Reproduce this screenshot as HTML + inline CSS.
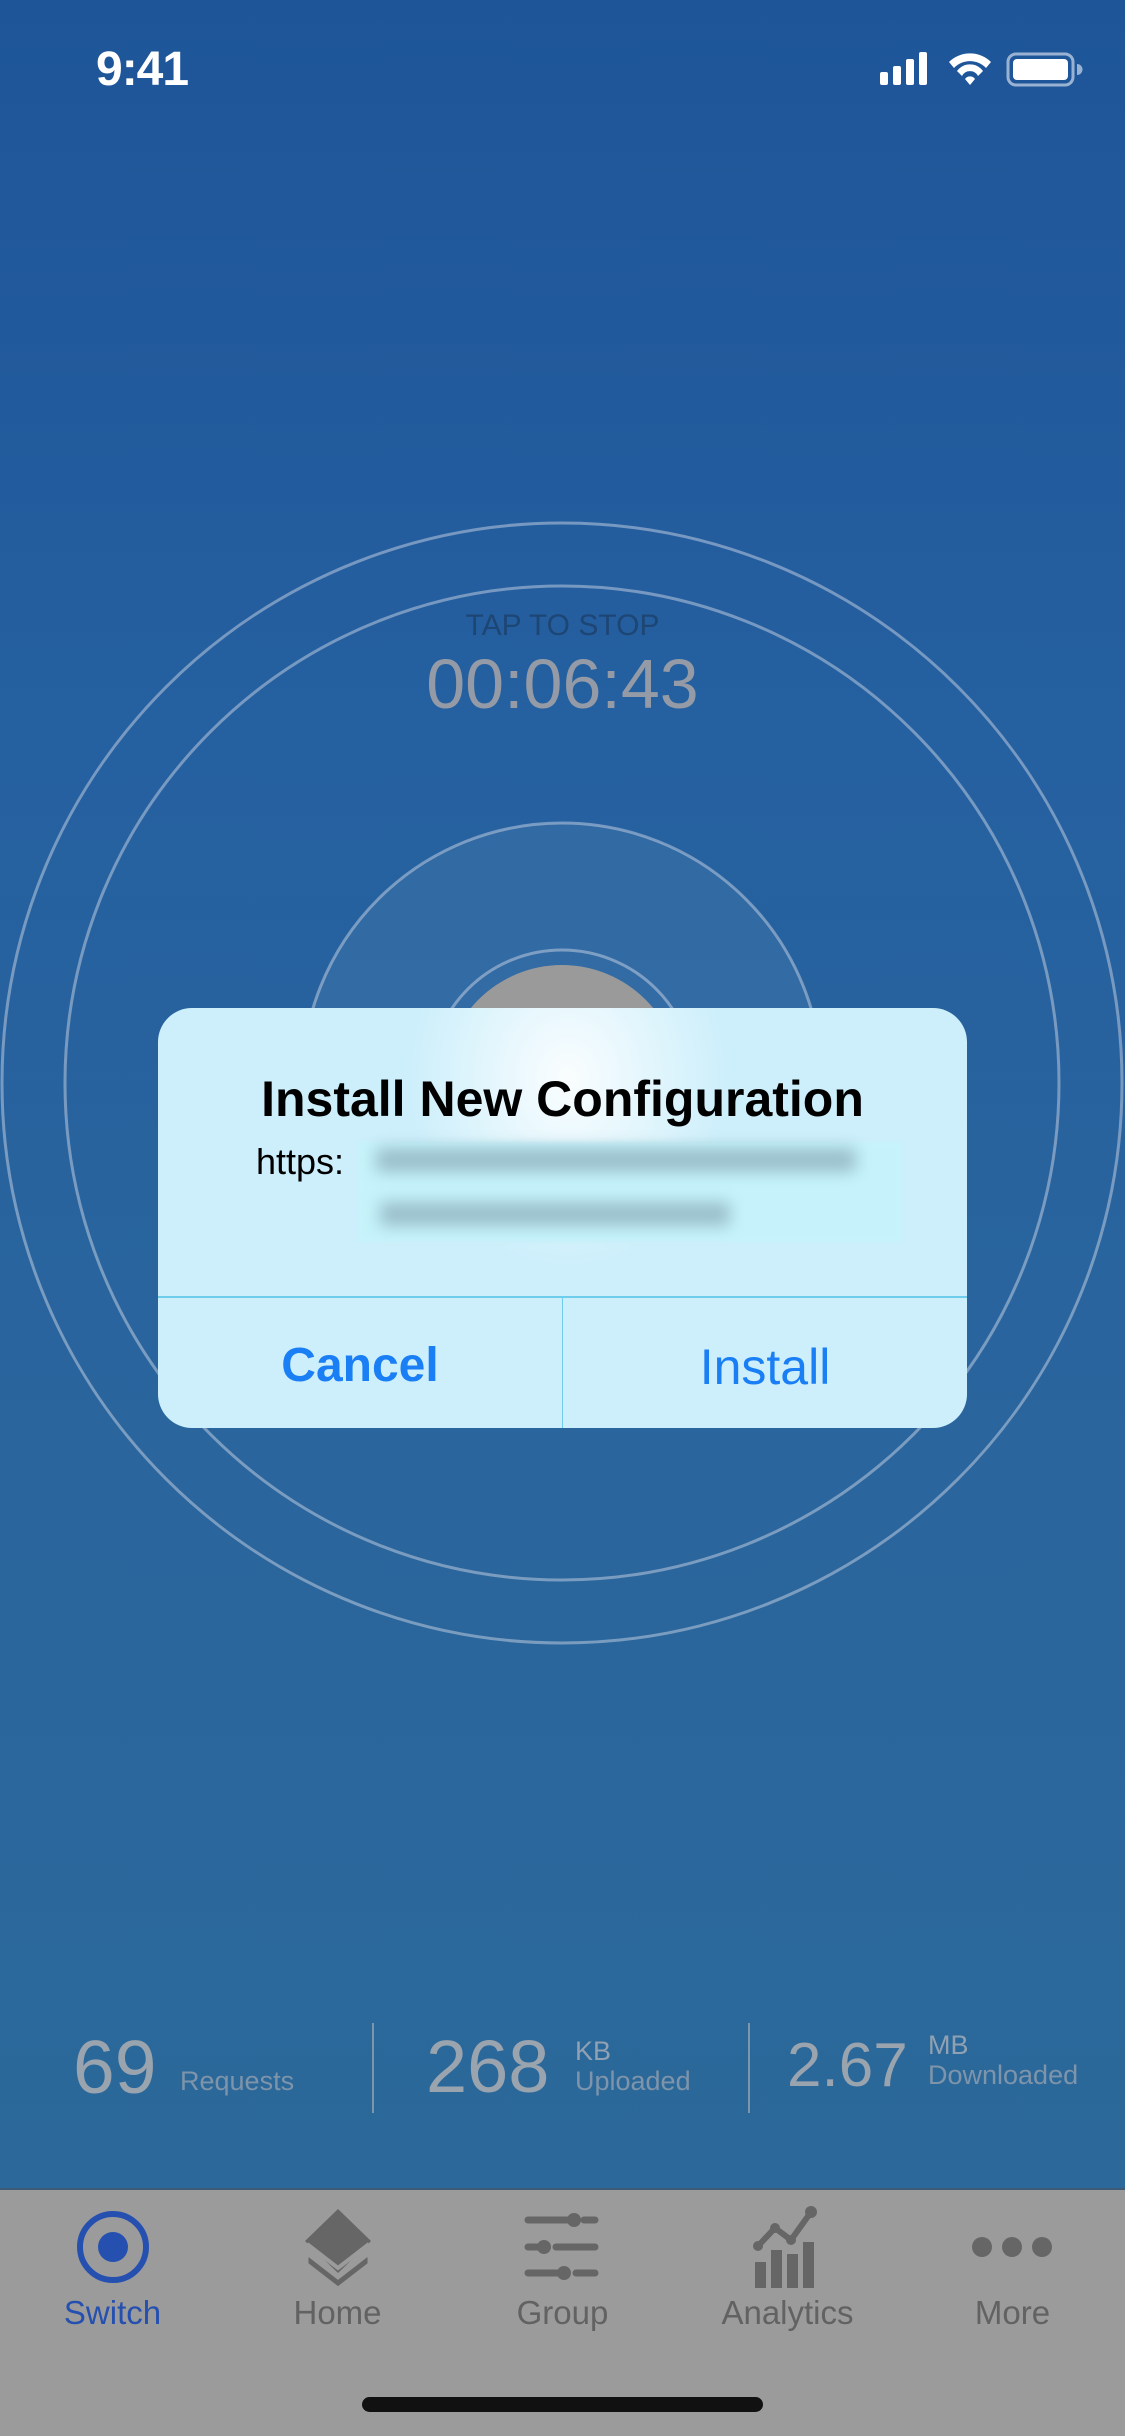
<!DOCTYPE html>
<html><head><meta charset="utf-8"><style>
*{margin:0;padding:0;box-sizing:border-box}
body{width:1125px;height:2436px;overflow:hidden;position:relative;font-family:"Liberation Sans",sans-serif;background:linear-gradient(#1e5599 0%,#2560a0 30%,#2a659d 60%,#2c6a99 100%)}
.abs{position:absolute}
.tab{position:absolute;top:2188px;width:225px;height:248px;text-align:center}
.tab .lbl{position:absolute;top:106px;left:0;width:100%;font-size:33px;color:#626262}
</style></head><body>
<div class="abs" style="left:96px;top:42px;font-size:48px;font-weight:bold;color:#fff;letter-spacing:-1px">9:41</div>
<svg class="abs" style="left:878px;top:50px" width="210" height="40" viewBox="0 0 210 40">
<rect x="2" y="22" width="8" height="13" rx="2" fill="#fff"/><rect x="15" y="16" width="8" height="19" rx="2" fill="#fff"/><rect x="28" y="9" width="8" height="26" rx="2" fill="#fff"/><rect x="41" y="2" width="8" height="33" rx="2" fill="#fff"/>
<path d="M71 12 A30 30 0 0 1 113 12 L108 18 A22 22 0 0 0 76 18Z M79 21 A16 16 0 0 1 105 21 L100 26 A9 9 0 0 0 84 26Z M87 29 A6 6 0 0 1 97 29 L92 35Z" fill="#fff"/>
<rect x="130" y="4" width="65" height="31" rx="8" fill="none" stroke="rgba(255,255,255,0.55)" stroke-width="3"/>
<rect x="135" y="9" width="55" height="21" rx="4" fill="#fff"/>
<path d="M199 14 a5 5 0 0 1 0 11z" fill="rgba(255,255,255,0.55)"/>
</svg>
<svg class="abs" style="left:0;top:0" width="1125" height="2188">
<circle cx="562" cy="1083" r="260" fill="rgba(255,255,255,0.06)"/>
<g fill="none" stroke="rgba(220,225,235,0.45)" stroke-width="3">
<circle cx="562" cy="1083" r="560"/><circle cx="562" cy="1083" r="497"/><circle cx="562" cy="1083" r="260"/><circle cx="562" cy="1083" r="133"/></g>
<circle cx="562" cy="1083" r="118" fill="#9a9a9a"/>
</svg>
<div class="abs" style="left:0;width:1125px;top:609px;text-align:center;font-size:30px;color:#1e4674">TAP TO STOP</div>
<div class="abs" style="left:0;width:1125px;top:644px;text-align:center;font-size:70px;color:#949ba6">00:06:43</div>
<div class="abs" style="left:158px;top:1008px;width:809px;height:420px;border-radius:34px;overflow:hidden;background:#cdeffb">
<div class="abs" style="left:250px;top:-120px;width:320px;height:380px;background:radial-gradient(ellipse at center,rgba(255,255,255,0.9),rgba(255,255,255,0) 70%)"></div>
<div class="abs" style="left:0;width:100%;top:62px;text-align:center;font-size:50px;font-weight:bold;color:#000">Install New Configuration</div>
<div class="abs" style="left:98px;top:133px;font-size:36px;color:#000">https:</div>
<div class="abs" style="left:200px;top:134px;width:544px;height:100px;background:#c6f3fb;filter:blur(2px)"></div>
<div class="abs" style="left:218px;top:140px;width:480px;height:24px;background:#92b5c2;filter:blur(8px);opacity:.85"></div>
<div class="abs" style="left:222px;top:194px;width:350px;height:24px;background:#92b5c2;filter:blur(8px);opacity:.85"></div>
<div class="abs" style="left:0;top:288px;width:100%;height:2px;background:#6fcdec"></div>
<div class="abs" style="left:404px;top:290px;width:1px;height:130px;background:#6fcdec"></div>
<div class="abs" style="left:0;width:404px;top:330px;text-align:center;font-size:48px;font-weight:bold;color:#1a7ef5">Cancel</div>
<div class="abs" style="left:405px;width:404px;top:330px;text-align:center;font-size:50px;color:#1a7ef5">Install</div>
</div>
<div class="abs" style="left:73px;top:2024px;font-size:75px;color:#9aa4ae">69</div>
<div class="abs" style="left:180px;top:2066px;font-size:27px;color:#7d94aa">Requests</div>
<div class="abs" style="left:372px;top:2023px;width:2px;height:90px;background:#7f95a9"></div>
<div class="abs" style="left:426px;top:2024px;font-size:74px;color:#9aa4ae">268</div>
<div class="abs" style="left:575px;top:2036px;font-size:27px;color:#8fa1b2">KB</div>
<div class="abs" style="left:575px;top:2066px;font-size:27px;color:#7d94aa">Uploaded</div>
<div class="abs" style="left:748px;top:2023px;width:2px;height:90px;background:#7f95a9"></div>
<div class="abs" style="left:787px;top:2030px;font-size:62px;color:#9aa4ae">2.67</div>
<div class="abs" style="left:928px;top:2030px;font-size:27px;color:#8fa1b2">MB</div>
<div class="abs" style="left:928px;top:2060px;font-size:27px;color:#7d94aa">Downloaded</div>
<div class="abs" style="left:0;top:2188px;width:1125px;height:248px;background:#9b9b9b;border-top:2px solid #3d5b77"></div>
<div class="tab" style="left:0"><svg class="abs" style="left:76px;top:20px" width="74" height="80"><circle cx="37" cy="39" r="33" fill="none" stroke="#2550b0" stroke-width="6"/><circle cx="37" cy="39" r="15" fill="#2550b0"/></svg><div class="lbl" style="color:#2550b0">Switch</div></div>
<div class="tab" style="left:225px"><svg class="abs" style="left:76px;top:18px" width="74" height="84"><path d="M37 3 L70 35 L37 67 L4 35Z" fill="#666"/><path d="M6 48 L37 72 L68 48 L68 58 L37 82 L6 58Z" fill="#666" stroke="#9b9b9b" stroke-width="3"/><path d="M6 38 L37 62 L68 38" fill="none" stroke="#9b9b9b" stroke-width="4"/></svg><div class="lbl">Home</div></div>
<div class="tab" style="left:450px"><svg class="abs" style="left:74px;top:22px" width="76" height="74" stroke="#666" stroke-width="7" stroke-linecap="round" fill="#666"><line x1="4" y1="10" x2="50" y2="10"/><circle cx="50" cy="10" r="7" stroke="none"/><line x1="60" y1="10" x2="71" y2="10"/><line x1="4" y1="37" x2="20" y2="37"/><circle cx="20" cy="37" r="7" stroke="none"/><line x1="32" y1="37" x2="71" y2="37"/><line x1="4" y1="63" x2="40" y2="63"/><circle cx="40" cy="63" r="7" stroke="none"/><line x1="52" y1="63" x2="71" y2="63"/></svg><div class="lbl">Group</div></div>
<div class="tab" style="left:675px"><svg class="abs" style="left:76px;top:18px" width="72" height="84" fill="#666"><rect x="4" y="56" width="11" height="26"/><rect x="20" y="44" width="11" height="38"/><rect x="36" y="48" width="11" height="34"/><rect x="52" y="36" width="11" height="46"/><path d="M7 40 L24 22 L40 34 L60 6" fill="none" stroke="#666" stroke-width="6"/><circle cx="7" cy="40" r="5"/><circle cx="24" cy="22" r="5"/><circle cx="40" cy="34" r="5"/><circle cx="60" cy="6" r="6"/></svg><div class="lbl">Analytics</div></div>
<div class="tab" style="left:900px"><svg class="abs" style="left:70px;top:44px" width="84" height="30" fill="#666"><circle cx="12" cy="15" r="10"/><circle cx="42" cy="15" r="10"/><circle cx="72" cy="15" r="10"/></svg><div class="lbl">More</div></div>
<div class="abs" style="left:362px;top:2397px;width:401px;height:15px;border-radius:8px;background:#111"></div>
</body></html>
